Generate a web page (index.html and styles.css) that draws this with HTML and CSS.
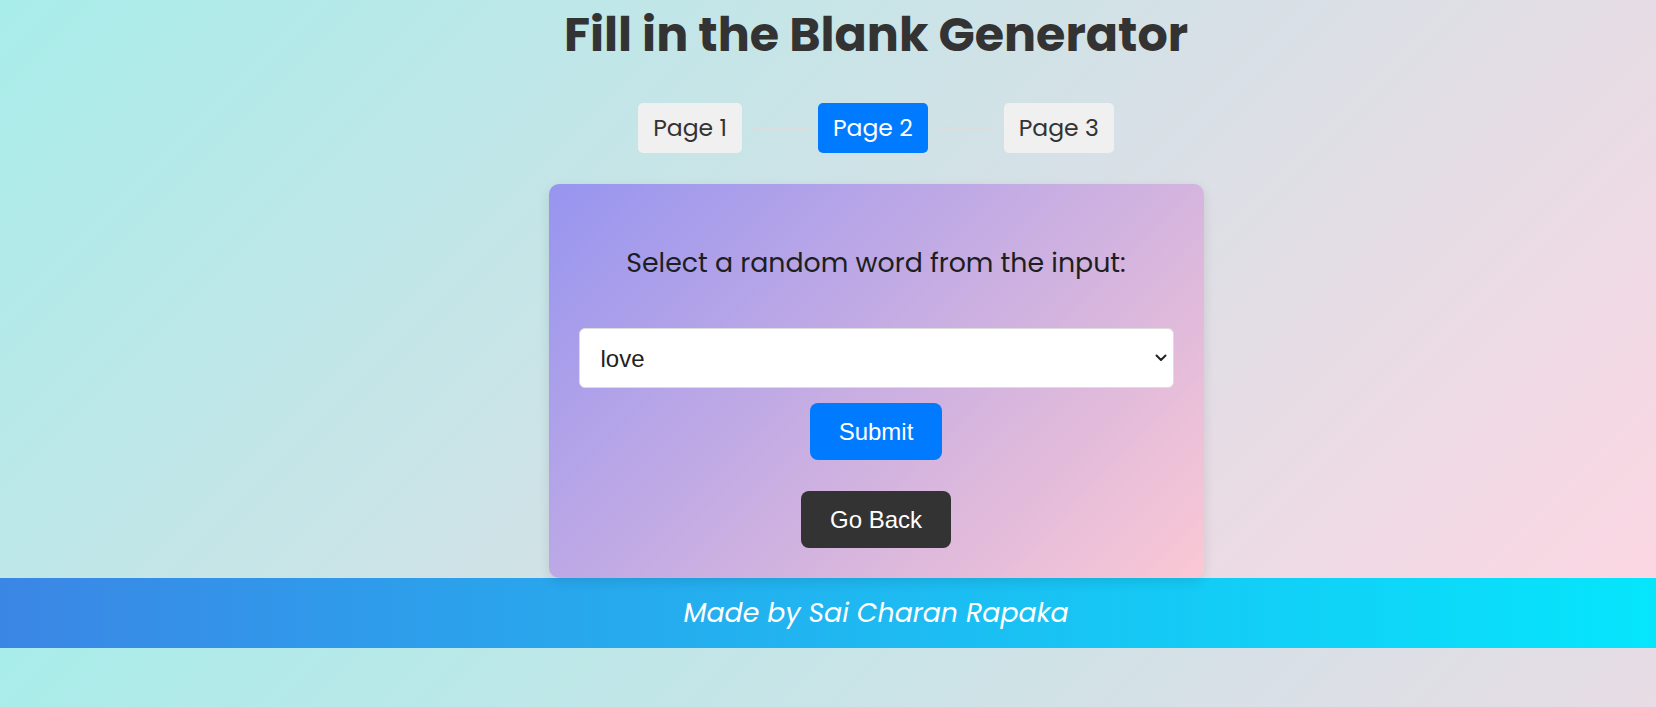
FILE: index.html
```html
<!DOCTYPE html>
<html lang="en">
<head>
<meta charset="utf-8">
<title>Fill in the Blank Generator</title>
<link rel="stylesheet" href="styles.css">
</head>
<body>
<div class="main">
  <h1 class="title">Fill in the Blank Generator</h1>
  <div class="steps">
    <div class="step">Page 1</div>
    <div class="step-line"></div>
    <div class="step active">Page 2</div>
    <div class="step-line"></div>
    <div class="step">Page 3</div>
  </div>
  <div class="card">
    <h2 class="card-title">Select a random word from the input:</h2>
    <div class="select-wrap">
      <select class="word-select">
        <option>love</option>
      </select>
      <svg class="select-arrow" width="12" height="8" viewBox="0 0 12 8" aria-hidden="true">
        <path d="M1.5 1.5 L6 6 L10.5 1.5" fill="none" stroke="#222" stroke-width="2" stroke-linecap="round" stroke-linejoin="round"/>
      </svg>
    </div>
    <button class="btn btn-submit">Submit</button>
    <button class="btn btn-back">Go Back</button>
  </div>
</div>
<footer class="footer">Made by Sai Charan Rapaka</footer>
</body>
</html>
```
FILE: styles.css
```css
html, body {
  margin: 0;
  padding: 0;
}
body {
  font-family: "Poppins", "Inter", "Noto Sans", sans-serif;
  background: linear-gradient(135deg, #a8edea 0%, #fed6e3 100%);
  color: #333;
}
.main {
  padding-left: 96px;
  display: flex;
  flex-direction: column;
  align-items: center;
}
.title {
  margin: 0;
  font-size: 47.6px;
  font-weight: 700;
  line-height: 70px;
  color: #333;
}
.steps {
  margin-top: 33px;
  display: flex;
  align-items: center;
}
.step {
  height: 50px;
  line-height: 50px;
  padding: 0 15px;
  background: #f0f0f0;
  border-radius: 5px;
  font-size: 23.5px;
  color: #333;
}
.step.active {
  background: #007bff;
  color: #fff;
}
.step-line {
  width: 58px;
  height: 2px;
  margin: 0 9px;
  background: #dcdcdc;
}
.card {
  margin-top: 31px;
  width: 655px;
  box-sizing: border-box;
  padding: 30px;
  border-radius: 10px;
  background: linear-gradient(135deg, #9795f0 0%, #fbc8d4 100%);
  box-shadow: 0 4px 12px rgba(0, 0, 0, 0.1);
  display: flex;
  flex-direction: column;
  align-items: center;
}
.card-title {
  margin: 31px 0 47px;
  font-size: 26.8px;
  line-height: 36px;
  font-weight: 400;
  color: #1e1e1e;
}
.select-wrap {
  position: relative;
  width: 100%;
  height: 60px;
}
.word-select {
  appearance: none;
  -webkit-appearance: none;
  width: 100%;
  height: 60px;
  box-sizing: border-box;
  padding: 0 21px;
  font-family: "Liberation Sans", Arial, sans-serif;
  font-size: 24px;
  color: #222;
  background: #fff;
  border: 1px solid #ddd;
  border-radius: 6px;
}
.select-arrow {
  position: absolute;
  right: 7px;
  top: 26px;
  pointer-events: none;
}
.btn {
  height: 57px;
  padding: 0 29px;
  border: none;
  border-radius: 8px;
  font-family: "Liberation Sans", Arial, sans-serif;
  font-size: 24px;
  color: #fff;
}
.btn-submit {
  margin-top: 15px;
  background: #007bff;
}
.btn-back {
  margin-top: 31px;
  background: #333;
}
.footer {
  height: 70px;
  line-height: 70px;
  text-align: center;
  padding-left: 96px;
  color: #fff;
  font-style: italic;
  font-size: 26.8px;
  background: linear-gradient(90deg, #3b86e5 0%, #05e6fc 100%);
}
```
